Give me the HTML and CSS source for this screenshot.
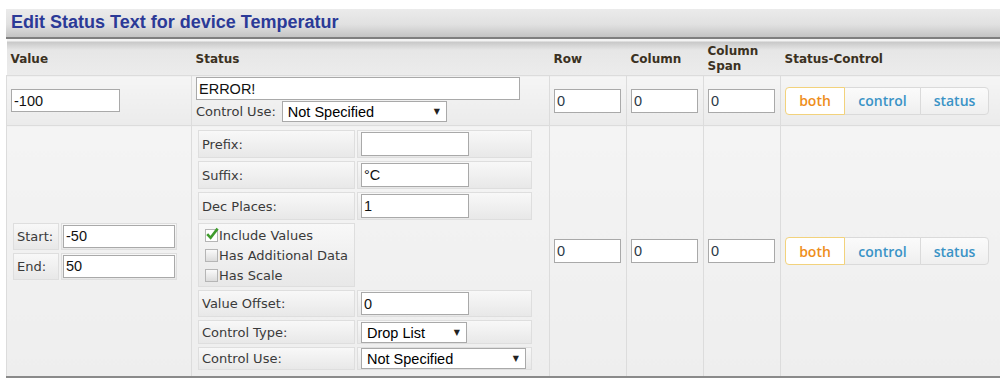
FILE: index.html
```html
<!DOCTYPE html>
<html lang="en">
<head>
    <meta charset="UTF-8">
    <meta name="viewport" content="width=device-width, initial-scale=1.0">
    <title>Edit Status Text</title>
    <link rel="stylesheet" href="styles.css">
</head>
<body>
    <div class="panel">
        <div class="panel-title">Edit Status Text for device Temperatur</div>
        <table class="status-table">
            <colgroup>
                <col class="c-value">
                <col class="c-status">
                <col class="c-num">
                <col class="c-num">
                <col class="c-num">
                <col class="c-control">
            </colgroup>
            <thead>
                <tr>
                    <th>Value</th>
                    <th>Status</th>
                    <th>Row</th>
                    <th>Column</th>
                    <th>Column<br>Span</th>
                    <th>Status-Control</th>
                </tr>
            </thead>
            <tbody>
                <tr class="row-single">
                    <td><input class="txt w-value" value="-100"></td>
                    <td class="status-cell">
                        <input class="txt w-status" value="ERROR!">
                        <div class="use-line">
                            <span class="lbl">Control Use:</span>
                            <span class="select w-use"><select><option>Not Specified</option></select></span>
                        </div>
                    </td>
                    <td><input class="txt w-num" value="0"></td>
                    <td><input class="txt w-num" value="0"></td>
                    <td><input class="txt w-num" value="0"></td>
                    <td>
                        <div class="btn-group">
                            <span class="btn btn-both">both</span>
                            <span class="btn btn-control">control</span>
                            <span class="btn btn-status">status</span>
                        </div>
                    </td>
                </tr>
                <tr class="row-range">
                    <td>
                        <table class="range">
                            <tr>
                                <td class="cell-l">Start:</td>
                                <td class="cell-f"><input class="txt w-range" value="-50"></td>
                            </tr>
                            <tr>
                                <td class="cell-l">End:</td>
                                <td class="cell-f"><input class="txt w-range" value="50"></td>
                            </tr>
                        </table>
                    </td>
                    <td class="status-cell">
                        <table class="opts">
                            <tr>
                                <td class="cell-l">Prefix:</td>
                                <td class="cell-f"><input class="txt w-opt" value=""></td>
                            </tr>
                            <tr>
                                <td class="cell-l">Suffix:</td>
                                <td class="cell-f"><input class="txt w-opt" value="°C"></td>
                            </tr>
                            <tr>
                                <td class="cell-l">Dec Places:</td>
                                <td class="cell-f"><input class="txt w-opt" value="1"></td>
                            </tr>
                            <tr>
                                <td class="cell-l checks">
                                    <div class="check"><span class="box on"><svg viewBox="0 0 14 14" width="14" height="14"><path d="M2.2 7.2 L5.6 10.8 L12.6 1.6" fill="none" stroke="#3f9b2c" stroke-width="2.6"/></svg></span>Include Values</div>
                                    <div class="check"><span class="box"></span>Has Additional Data</div>
                                    <div class="check"><span class="box"></span>Has Scale</div>
                                </td>
                                <td class="empty"></td>
                            </tr>
                            <tr>
                                <td class="cell-l">Value Offset:</td>
                                <td class="cell-f"><input class="txt w-opt short" value="0"></td>
                            </tr>
                            <tr class="tight">
                                <td class="cell-l">Control Type:</td>
                                <td class="cell-f"><span class="select w-type"><select><option>Drop List</option></select></span></td>
                            </tr>
                            <tr class="last">
                                <td class="cell-l">Control Use:</td>
                                <td class="cell-f"><span class="select w-use"><select><option>Not Specified</option></select></span></td>
                            </tr>
                        </table>
                    </td>
                    <td><input class="txt w-num" value="0"></td>
                    <td><input class="txt w-num" value="0"></td>
                    <td><input class="txt w-num" value="0"></td>
                    <td>
                        <div class="btn-group">
                            <span class="btn btn-both">both</span>
                            <span class="btn btn-control">control</span>
                            <span class="btn btn-status">status</span>
                        </div>
                    </td>
                </tr>
            </tbody>
        </table>
    </div>
</body>
</html>
```

FILE: styles.css
```css
body {
    margin: 0;
    background: #fff;
    font-family: "DejaVu Sans", Verdana, sans-serif;
    color: #333;
}
.panel {
    margin: 9px 0 0 6px;
    width: 994px;
}
.panel-title {
    box-sizing: border-box;
    height: 30px;
    padding: 3px 0 0 5px;
    line-height: 24px;
    border-bottom: 2px solid #7f7f7f;
    background: linear-gradient(#ebebeb, #e1e1e1 55%, #c4c4c4);
    color: #2b3a97;
    font: bold 18px "Liberation Sans", Arial, sans-serif;
}
.status-table {
    width: 994px;
    table-layout: fixed;
    border-collapse: collapse;
    border-bottom: 2px solid #8a8a8a;
}
.c-value { width: 185px; }
.c-status { width: 358px; }
.c-num { width: 77px; }
.c-control { width: 220px; }
.status-table thead th {
    height: 32px;
    padding: 4px 4px 0;
    text-align: left;
    vertical-align: middle;
    font-size: 12px;
    font-weight: bold;
    line-height: 15px;
    color: #3b3122;
    background: linear-gradient(#f3f3f3 0, #f3f3f3 2px, #c8c8c8 3px, #e6e6e6 11px, #ececec 100%);
}
.status-table > tbody > tr > td {
    border: 1px solid #dcdcdc;
    padding: 0 4px;
    vertical-align: middle;
}
.row-single > td {
    background: linear-gradient(#f5f5f5, #ebebeb);
}
.row-range > td {
    background: linear-gradient(#f4f4f4, #eeeeee);
}
.status-table > tbody > tr > td.status-cell {
    padding: 1px 4px 3px;
}
.row-range > td.status-cell {
    padding: 0 4px;
}

/* inputs */
.txt {
    display: block;
    box-sizing: border-box;
    height: 23px;
    margin: 0;
    padding: 0 2px;
    border: 1px solid #a9a9a9;
    background: #fff;
    color: #111;
    font: 14.5px "Liberation Sans", Arial, sans-serif;
}
.w-value { width: 109px; }
.w-status { width: 324px; }
.w-num { width: 67px; height: 24px; color: #2c3a48; }
.w-range { width: 112px; }
.w-opt { width: 108px; height: 24px; }
.w-opt.short { height: 23px; }

.use-line {
    display: flex;
    align-items: center;
    margin-top: 1px;
    font-size: 13px;
    color: #3a3a3a;
}
.use-line .lbl {
    margin-right: 6px;
}

.select {
    position: relative;
    display: inline-block;
    vertical-align: middle;
}
.select select {
    -webkit-appearance: none;
    appearance: none;
    display: block;
    box-sizing: border-box;
    width: 100%;
    height: 21px;
    margin: 0;
    padding: 0 18px 0 5px;
    border: 1px solid #a9a9a9;
    border-radius: 0;
    background: #fff;
    color: #000;
    font: 14.5px "Liberation Sans", Arial, sans-serif;
}
.select::after {
    content: "\25BC";
    position: absolute;
    right: 7px;
    top: 6px;
    font-size: 8px;
    line-height: 9px;
    color: #222;
    pointer-events: none;
}
.w-use { width: 165px; }
.w-type { width: 106px; }

/* start / end and options */
.range,
.opts {
    border-collapse: separate;
    border-spacing: 2px 3px;
}
.cell-l,
.cell-f {
    border: 1px solid #dedede;
    background: linear-gradient(#f8f8f8, #e8e8e8);
    font-size: 13px;
    color: #3a3a3a;
    vertical-align: middle;
    white-space: nowrap;
}
.range .cell-l {
    width: 38px;
    height: 24px;
    padding: 0 3px;
}
.range .cell-f {
    padding: 1px;
}
.opts .cell-l {
    box-sizing: border-box;
    width: 157px;
    padding: 0 3px;
}
.opts .cell-f {
    box-sizing: border-box;
    width: 175px;
    padding: 1px 3px;
}
.opts .tight .cell-f {
    padding: 1px 3px 0;
}
.opts .last .cell-f {
    padding: 0 3px;
}
.opts .cell-l.checks {
    padding: 1px 4px 1px 6px;
    vertical-align: top;
}
.empty {
    padding: 0;
}
.check {
    display: flex;
    align-items: center;
    height: 20px;
}
.box {
    position: relative;
    flex: none;
    box-sizing: border-box;
    width: 13px;
    height: 13px;
    margin-right: 1px;
    border: 1px solid #b5b5b5;
    background: linear-gradient(#fafafa, #dcdcdc);
}
.box.on {
    background: #fff;
}
.box svg {
    position: absolute;
    left: -1px;
    top: -3px;
}

/* status control buttons */
.btn-group {
    display: flex;
}
.btn {
    position: relative;
    display: flex;
    align-items: center;
    justify-content: center;
    box-sizing: border-box;
    height: 28px;
    border: 1px solid #dadada;
    background: linear-gradient(#fbfbfb, #efefef);
    color: #3a93c6;
    font: 600 14px "Open Sans", sans-serif;
}
.btn + .btn {
    margin-left: -1px;
}
.btn-both {
    z-index: 1;
    width: 60px;
    border-color: #f2d27c;
    border-radius: 4px 0 0 4px;
    background: #fff;
    color: #ee8e1b;
}
.btn-control {
    width: 77px;
}
.btn-status {
    width: 69px;
    border-radius: 0 4px 4px 0;
}
```
